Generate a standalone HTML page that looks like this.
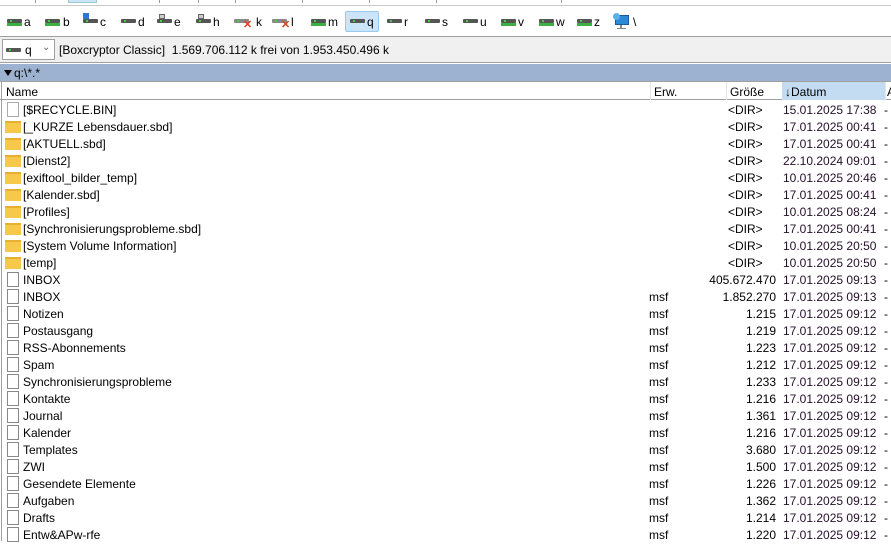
<!DOCTYPE html>
<html><head><meta charset="utf-8"><style>
*{margin:0;padding:0;box-sizing:border-box}
body{width:891px;height:541px;overflow:hidden;background:#fff;font-family:"Liberation Sans",sans-serif;font-size:12px;color:#000;position:relative}
.abs{position:absolute}
.di{position:absolute;top:9px;width:15px;height:4px;background:#555;border-radius:1px}
.di.g::after{content:"";position:absolute;left:0;top:4px;width:15px;height:3px;background:#3cb043}
.di::before{content:"";position:absolute;left:3px;top:1px;width:2px;height:2px;background:#4c4}
.dl{position:absolute;top:15px;font-size:12px}
.row{position:absolute;left:0;width:891px;height:17px;line-height:17px;white-space:nowrap}
.row .n{position:absolute;left:23px;top:2px}
.row .e{position:absolute;left:649px;top:2px}
.row .s{position:absolute;right:115px;top:2px}
.row .d{position:absolute;left:728px;top:2px}
.row .dt{position:absolute;left:783px;top:2px;color:#25102a}
.row .x{position:absolute;left:884px;top:2px}
.fold{position:absolute;left:5px;top:4px;width:16px;height:12px;background:#f7c94a;border-top:2px solid #e8b030}
.file{position:absolute;left:7px;top:2px;width:12px;height:15px;border:1px solid #888;background:#fff}
</style></head><body>
<div class="abs" style="left:0;top:0;width:891px;height:6px;border-bottom:1px solid #c8c8c8"></div>
<div class="abs" style="left:68px;top:0;width:29px;height:3px;background:#cce4f7;border:1px solid #9cc;border-top:none"></div>
<div class="abs" style="left:35px;top:0;width:1px;height:3px;background:#999"></div>
<div class="abs" style="left:159px;top:0;width:1px;height:3px;background:#999"></div>
<div class="abs" style="left:198px;top:0;width:1px;height:3px;background:#999"></div>
<div class="abs" style="left:235px;top:0;width:1px;height:3px;background:#999"></div>
<div class="abs" style="left:302px;top:0;width:1px;height:3px;background:#999"></div>
<div class="abs" style="left:369px;top:0;width:1px;height:3px;background:#999"></div>
<div class="abs" style="left:436px;top:0;width:1px;height:3px;background:#999"></div>
<div class="abs" style="left:561px;top:0;width:1px;height:3px;background:#999"></div>

<div class="abs" style="left:345px;top:11px;width:34px;height:21px;background:#cce4f7;border:1px solid #99c9ef;border-radius:2px"></div>

<div class="di g" style="left:7px;top:19px"></div><div class="dl" style="left:24px">a</div>
<div class="di g" style="left:45px;top:19px"></div><div class="dl" style="left:63px">b</div>
<div class="abs" style="left:83px;top:13px;width:6px;height:6px;background:#2a7ad5"></div>
<div class="di" style="left:83px;top:19px"></div><div class="dl" style="left:100px">c</div>
<div class="di" style="left:121px;top:19px"></div><div class="dl" style="left:138px">d</div>
<div class="abs" style="left:159px;top:14px;width:6px;height:5px;border:1px solid #666;background:#ccc"></div>
<div class="di" style="left:157px;top:19px"></div><div class="dl" style="left:174px">e</div>
<div class="abs" style="left:198px;top:14px;width:6px;height:5px;border:1px solid #666;background:#ccc"></div>
<div class="di" style="left:196px;top:19px"></div><div class="dl" style="left:213px">h</div>
<div class="di" style="left:234px;top:19px;background:#888"></div><div class="abs" style="left:243px;top:18px;color:#e04020;font-size:11px;font-weight:bold">✕</div><div class="dl" style="left:256px">k</div>
<div class="di" style="left:272px;top:19px;background:#888"></div><div class="abs" style="left:281px;top:18px;color:#e04020;font-size:11px;font-weight:bold">✕</div><div class="dl" style="left:291px">l</div>
<div class="di g" style="left:311px;top:19px"></div><div class="dl" style="left:328px">m</div>
<div class="di" style="left:350px;top:19px"></div><div class="dl" style="left:367px">q</div>
<div class="di" style="left:387px;top:19px"></div><div class="dl" style="left:404px">r</div>
<div class="di" style="left:425px;top:19px"></div><div class="dl" style="left:442px">s</div>
<div class="di" style="left:463px;top:19px"></div><div class="dl" style="left:480px">u</div>
<div class="di g" style="left:501px;top:19px"></div><div class="dl" style="left:518px">v</div>
<div class="di g" style="left:539px;top:19px"></div><div class="dl" style="left:556px">w</div>
<div class="di g" style="left:577px;top:19px"></div><div class="dl" style="left:594px">z</div>
<div class="abs" style="left:615px;top:15px;width:14px;height:10px;background:#2a8ad8;border:1px solid #1a5a9a"></div>
<div class="abs" style="left:613px;top:13px;width:7px;height:7px;border-radius:50%;background:#5ab0e8"></div>
<div class="abs" style="left:620px;top:25px;width:2px;height:3px;background:#888"></div>
<div class="abs" style="left:617px;top:28px;width:9px;height:1px;background:#888"></div>
<div class="dl" style="left:633px">\</div>

<div class="abs" style="left:0;top:36px;width:891px;height:27px;background:#f0f0f0;border-top:1px solid #a0a0a0;border-bottom:1px solid #a0a0a0"></div>
<div class="abs" style="left:2px;top:39px;width:53px;height:21px;background:#fff;border:1px solid #a0a0a0"></div>
<div class="di" style="left:6px;top:48px"></div>
<div class="abs" style="left:25px;top:43px">q</div>
<div class="abs" style="left:42px;top:42px;color:#666;font-size:10px">&#8964;</div>
<div class="abs" style="left:59px;top:43px">[Boxcryptor Classic]&nbsp; 1.569.706.112 k frei von 1.953.450.496 k</div>

<div class="abs" style="left:0;top:64px;width:891px;height:17px;background:#9db2d1"></div>
<div class="abs" style="left:4px;top:70px;width:0;height:0;border-left:4px solid transparent;border-right:4px solid transparent;border-top:6px solid #000"></div>
<div class="abs" style="left:14px;top:66px">q:\*.*</div>

<div class="abs" style="left:0;top:81px;width:891px;height:1px;background:#a0a0a0"></div>
<div class="abs" style="left:1px;top:82px;width:1px;height:459px;background:#a0a0a0"></div>
<div class="abs" style="left:0;top:82px;width:891px;height:18px;border-bottom:1px solid #a0a0a0"></div>
<div class="abs" style="left:782px;top:82px;width:103px;height:18px;background:#c4dcf2"></div>
<div class="abs" style="left:650px;top:82px;width:1px;height:18px;background:#e5e5e5"></div>
<div class="abs" style="left:726px;top:82px;width:1px;height:18px;background:#e5e5e5"></div>
<div class="abs" style="left:885px;top:82px;width:1px;height:18px;background:#e5e5e5"></div>
<div class="abs" style="left:6px;top:85px">Name</div>
<div class="abs" style="left:654px;top:85px">Erw.</div>
<div class="abs" style="left:730px;top:85px">Größe</div>
<div class="abs" style="left:785px;top:85px"><b>&#8595;</b>Datum</div>
<div class="abs" style="left:887px;top:85px">A</div>

<div class="row" style="top:100px"><div class="file" style="border-color:#aaa"></div><span class="n">[$RECYCLE.BIN]</span><span class="d">&lt;DIR&gt;</span><span class="dt">15.01.2025 17:38</span><span class="x">-</span></div>
<div class="row" style="top:117px"><div class="fold"></div><span class="n">[_KURZE Lebensdauer.sbd]</span><span class="d">&lt;DIR&gt;</span><span class="dt">17.01.2025 00:41</span><span class="x">-</span></div>
<div class="row" style="top:134px"><div class="fold"></div><span class="n">[AKTUELL.sbd]</span><span class="d">&lt;DIR&gt;</span><span class="dt">17.01.2025 00:41</span><span class="x">-</span></div>
<div class="row" style="top:151px"><div class="fold"></div><span class="n">[Dienst2]</span><span class="d">&lt;DIR&gt;</span><span class="dt">22.10.2024 09:01</span><span class="x">-</span></div>
<div class="row" style="top:168px"><div class="fold"></div><span class="n">[exiftool_bilder_temp]</span><span class="d">&lt;DIR&gt;</span><span class="dt">10.01.2025 20:46</span><span class="x">-</span></div>
<div class="row" style="top:185px"><div class="fold"></div><span class="n">[Kalender.sbd]</span><span class="d">&lt;DIR&gt;</span><span class="dt">17.01.2025 00:41</span><span class="x">-</span></div>
<div class="row" style="top:202px"><div class="fold"></div><span class="n">[Profiles]</span><span class="d">&lt;DIR&gt;</span><span class="dt">10.01.2025 08:24</span><span class="x">-</span></div>
<div class="row" style="top:219px"><div class="fold"></div><span class="n">[Synchronisierungsprobleme.sbd]</span><span class="d">&lt;DIR&gt;</span><span class="dt">17.01.2025 00:41</span><span class="x">-</span></div>
<div class="row" style="top:236px"><div class="fold"></div><span class="n">[System Volume Information]</span><span class="d">&lt;DIR&gt;</span><span class="dt">10.01.2025 20:50</span><span class="x">-</span></div>
<div class="row" style="top:253px"><div class="fold"></div><span class="n">[temp]</span><span class="d">&lt;DIR&gt;</span><span class="dt">10.01.2025 20:50</span><span class="x">-</span></div>
<div class="row" style="top:270px"><div class="file"></div><span class="n">INBOX</span><span class="s">405.672.470</span><span class="dt">17.01.2025 09:13</span><span class="x">-</span></div>
<div class="row" style="top:287px"><div class="file"></div><span class="n">INBOX</span><span class="e">msf</span><span class="s">1.852.270</span><span class="dt">17.01.2025 09:13</span><span class="x">-</span></div>
<div class="row" style="top:304px"><div class="file"></div><span class="n">Notizen</span><span class="e">msf</span><span class="s">1.215</span><span class="dt">17.01.2025 09:12</span><span class="x">-</span></div>
<div class="row" style="top:321px"><div class="file"></div><span class="n">Postausgang</span><span class="e">msf</span><span class="s">1.219</span><span class="dt">17.01.2025 09:12</span><span class="x">-</span></div>
<div class="row" style="top:338px"><div class="file"></div><span class="n">RSS-Abonnements</span><span class="e">msf</span><span class="s">1.223</span><span class="dt">17.01.2025 09:12</span><span class="x">-</span></div>
<div class="row" style="top:355px"><div class="file"></div><span class="n">Spam</span><span class="e">msf</span><span class="s">1.212</span><span class="dt">17.01.2025 09:12</span><span class="x">-</span></div>
<div class="row" style="top:372px"><div class="file"></div><span class="n">Synchronisierungsprobleme</span><span class="e">msf</span><span class="s">1.233</span><span class="dt">17.01.2025 09:12</span><span class="x">-</span></div>
<div class="row" style="top:389px"><div class="file"></div><span class="n">Kontakte</span><span class="e">msf</span><span class="s">1.216</span><span class="dt">17.01.2025 09:12</span><span class="x">-</span></div>
<div class="row" style="top:406px"><div class="file"></div><span class="n">Journal</span><span class="e">msf</span><span class="s">1.361</span><span class="dt">17.01.2025 09:12</span><span class="x">-</span></div>
<div class="row" style="top:423px"><div class="file"></div><span class="n">Kalender</span><span class="e">msf</span><span class="s">1.216</span><span class="dt">17.01.2025 09:12</span><span class="x">-</span></div>
<div class="row" style="top:440px"><div class="file"></div><span class="n">Templates</span><span class="e">msf</span><span class="s">3.680</span><span class="dt">17.01.2025 09:12</span><span class="x">-</span></div>
<div class="row" style="top:457px"><div class="file"></div><span class="n">ZWI</span><span class="e">msf</span><span class="s">1.500</span><span class="dt">17.01.2025 09:12</span><span class="x">-</span></div>
<div class="row" style="top:474px"><div class="file"></div><span class="n">Gesendete Elemente</span><span class="e">msf</span><span class="s">1.226</span><span class="dt">17.01.2025 09:12</span><span class="x">-</span></div>
<div class="row" style="top:491px"><div class="file"></div><span class="n">Aufgaben</span><span class="e">msf</span><span class="s">1.362</span><span class="dt">17.01.2025 09:12</span><span class="x">-</span></div>
<div class="row" style="top:508px"><div class="file"></div><span class="n">Drafts</span><span class="e">msf</span><span class="s">1.214</span><span class="dt">17.01.2025 09:12</span><span class="x">-</span></div>
<div class="row" style="top:525px"><div class="file"></div><span class="n">Entw&amp;APw-rfe</span><span class="e">msf</span><span class="s">1.220</span><span class="dt">17.01.2025 09:12</span><span class="x">-</span></div>
</body></html>
